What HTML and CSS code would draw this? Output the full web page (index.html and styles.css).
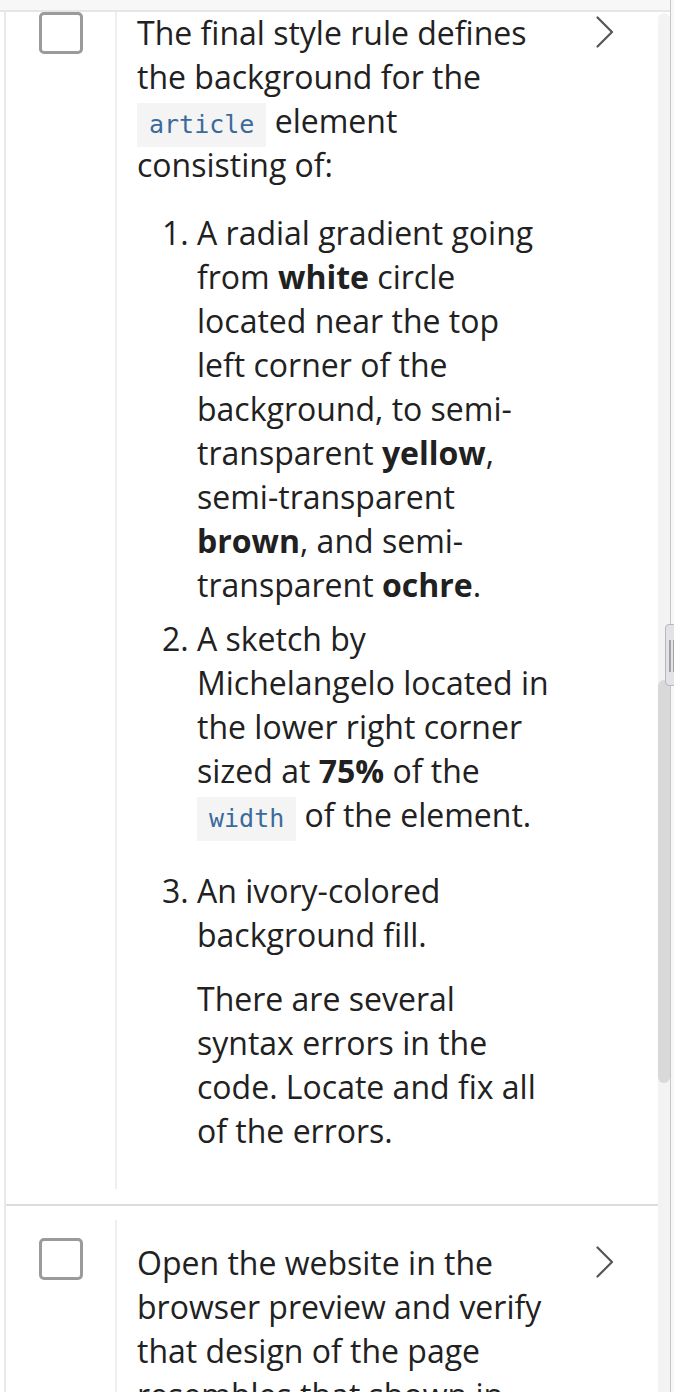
FILE: index.html
```html
<!DOCTYPE html>
<html lang="en">
<head>
<meta charset="utf-8">
<title>Checklist</title>
<link rel="stylesheet" href="styles.css">
</head>
<body>
<div class="main">
  <div class="topbar"></div>
  <div class="content">
    <div class="list">
      <div class="item item-first">
        <div class="check-col"><span class="check"></span></div>
        <div class="body">
          <div class="text">
            <p class="lead">The final style rule defines the background for the <code>article</code> element consisting of:</p>
            <ol class="steps">
              <li class="step step-1">A radial gradient going from <b>white</b> circle located near the top left corner of the background, to semi-transparent <b>yellow</b>, semi-transparent <b>brown</b>, and semi-transparent <b>ochre</b>.</li>
              <li class="step step-2">A sketch by Michelangelo located in the lower right corner sized at <b>75%</b> of the <code>width</code> of the element.</li>
              <li class="step step-3">An ivory-colored background fill.
                <p class="note">There are several syntax errors in the code. Locate and fix all of the errors.</p>
              </li>
            </ol>
          </div>
          <div class="chev-col">
            <svg class="chev" width="18" height="32" viewBox="0 0 18 32"><polyline points="1.5,1.5 16,16 1.5,30.5" fill="none" stroke="#555" stroke-width="2.2" stroke-linecap="round" stroke-linejoin="round"/></svg>
          </div>
        </div>
      </div>
      <div class="item">
        <div class="check-col"><span class="check"></span></div>
        <div class="body">
          <div class="text">
            <p class="lead">Open the website in the browser preview and verify that design of the page resembles that shown in Figure 4-66.</p>
          </div>
          <div class="chev-col">
            <svg class="chev" width="18" height="32" viewBox="0 0 18 32"><polyline points="1.5,1.5 16,16 1.5,30.5" fill="none" stroke="#555" stroke-width="2.2" stroke-linecap="round" stroke-linejoin="round"/></svg>
          </div>
        </div>
      </div>
    </div>
    <div class="track"><div class="thumb"></div></div>
  </div>
</div>
<div class="rail"></div>
<div class="handle"><span class="grip"></span><span class="grip"></span></div>
</body>
</html>
```
FILE: styles.css
```css
html, body {
  margin: 0;
  padding: 0;
}
body {
  width: 674px;
  height: 1392px;
  overflow: hidden;
  display: flex;
  position: relative;
  background: #ffffff;
  font-family: "Open Sans", "Noto Sans", sans-serif;
  color: #212121;
}
.main {
  width: 670px;
  display: flex;
  flex-direction: column;
}
.topbar {
  height: 10px;
  background: #f7f7f7;
  border-bottom: 2px solid #e6e6e6;
  flex: none;
}
.content {
  display: flex;
  flex: 1;
  min-height: 0;
}
.list {
  margin-left: 4px;
  border-left: 2px solid #e9e9e9;
  width: 652px;
  flex: none;
}
.item {
  display: flex;
  padding: 14px 0 15px;
  border-bottom: 2px solid #dcdcdc;
}
.check-col {
  width: 109px;
  flex: none;
  border-right: 2px solid #eeeeee;
  display: flex;
  justify-content: center;
  align-items: flex-start;
}
.check {
  display: block;
  box-sizing: border-box;
  width: 44px;
  height: 42px;
  margin-top: 18px;
  margin-left: 1px;
  border: 3px solid #9b9b9b;
  border-radius: 5px;
  background: #fff;
}
.body {
  flex: 1;
  display: flex;
  padding-left: 20px;
  min-width: 0;
}
.text {
  width: 414px;
  flex: none;
  padding-top: 21px;
  padding-bottom: 36px;
  font-size: 32px;
  line-height: 44px;
}
.chev-col {
  flex: 1;
  padding-left: 45px;
}
.chev {
  display: block;
  margin-top: 26px;
}
.item-first {
  padding-top: 0;
}
.item-first .check {
  margin-top: 0;
}
.item-first .text {
  padding-top: 0;
  margin-top: -1px;
}
.item-first .chev {
  margin-top: 4px;
}
p {
  margin: 0;
}
.lead {
  margin-bottom: 24px;
}
.steps {
  margin: 0;
  padding-left: 60px;
}
.step-1 {
  margin-bottom: 10px;
}
.step-2 {
  margin-bottom: 32px;
}
.note {
  margin-top: 20px;
}
b {
  font-weight: 700;
}
code {
  font-family: "DejaVu Sans Mono", "Liberation Mono", monospace;
  font-size: 25px;
  line-height: 1;
  color: #3a6b9c;
  background: #f4f4f4;
  padding: 7px 12px 8px;
}
.track {
  width: 12px;
  flex: none;
  margin-top: 1px;
  background: #f3f3f3;
  border-radius: 6px 6px 0 0;
}
.thumb {
  margin-top: 667px;
  height: 403px;
  background: #d9d9d9;
  border-radius: 6px;
}
.rail {
  width: 3px;
  flex: none;
  border-left: 1px solid #c6c6c6;
  background: #f7f7f7;
}
.handle {
  position: absolute;
  left: 665px;
  top: 624px;
  width: 12px;
  height: 62px;
  box-sizing: border-box;
  background: #e3e3e7;
  border: 1px solid #b8b8b8;
  border-radius: 4px;
  display: flex;
  gap: 2px;
  padding: 15px 0 0 3px;
}
.grip {
  width: 2px;
  height: 32px;
  background: #a3a3a3;
}
```
